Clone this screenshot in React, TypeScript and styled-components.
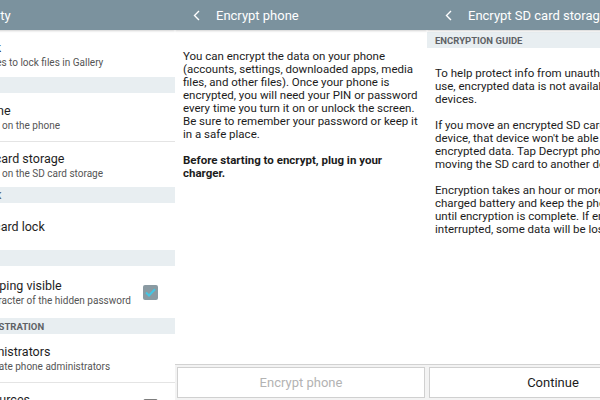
import React from "react";
import styled, { createGlobalStyle } from "styled-components";

const GlobalStyle = createGlobalStyle`
  * { box-sizing: border-box; }
  body {
    margin: 0;
    background: #ffffff;
    font-family: Roboto, "Noto Sans", "Liberation Sans", sans-serif;
    color: #222;
  }
  #root { width: 600px; height: 400px; overflow: hidden; }
`;

const Screen = styled.main`
  display: flex;
  width: 600px;
  height: 400px;
  overflow: hidden;
`;

const Panel = styled.section<{ $w: number; $clipLeft?: boolean }>`
  width: ${(p) => p.$w}px;
  flex-shrink: 0;
  height: 100%;
  overflow: hidden;
  display: flex;
  justify-content: ${(p) => (p.$clipLeft ? "flex-end" : "flex-start")};
`;

const Phone = styled.div`
  width: 252px;
  flex-shrink: 0;
  height: 100%;
  display: flex;
  flex-direction: column;
`;

const AppBar = styled.header`
  height: 30px;
  flex-shrink: 0;
  display: flex;
  align-items: center;
  gap: 16px;
  padding-left: 18px;
  background: #7b929e;
  color: #ffffff;
  box-shadow: 0 1px 2px rgba(0, 0, 0, 0.18);
  position: relative;
  z-index: 1;
`;

const Title = styled.h1`
  margin: 0;
  font-size: 13px;
  font-weight: 400;
  white-space: nowrap;
`;

const Back = () => (
  <svg width="7" height="11" viewBox="0 0 7 11" fill="none">
    <polyline points="6,1 1.5,5.5 6,10" stroke="#fff" strokeWidth="1.4" />
  </svg>
);

const Band = styled.div<{ $top?: number }>`
  height: 16px;
  flex-shrink: 0;
  margin-top: ${(p) => p.$top ?? 0}px;
  display: flex;
  align-items: center;
  padding-left: 8px;
  background: #e8eef1;
  color: #5e6266;
  font-size: 9.5px;
  font-weight: 700;
  white-space: nowrap;
`;

const Item = styled.div<{ $divider?: boolean; $h?: number }>`
  height: ${(p) => p.$h ?? 46}px;
  flex-shrink: 0;
  display: flex;
  align-items: center;
  justify-content: space-between;
  padding: 0 17px 0 8px;
  border-bottom: ${(p) => (p.$divider ? "1px solid #e4e4e4" : "none")};
`;

const ItemText = styled.div`
  display: flex;
  flex-direction: column;
  gap: 2px;
  white-space: nowrap;
`;

const ItemTitle = styled.span`
  font-size: 12.5px;
  color: #1e1e1e;
`;

const ItemSub = styled.span`
  font-size: 10px;
  color: #555;
`;

const Check = styled.span<{ $on?: boolean }>`
  width: 15px;
  height: 15px;
  flex-shrink: 0;
  border-radius: 2px;
  display: flex;
  align-items: center;
  justify-content: center;
  background: ${(p) => (p.$on ? "#8a9aa2" : "#ffffff")};
  border: ${(p) => (p.$on ? "none" : "1.5px solid #7d7d7d")};
`;

const Tick = () => (
  <svg width="11" height="9" viewBox="0 0 11 9" fill="none">
    <polyline points="1,4.5 4,7.5 10,1.2" stroke="#43c6e3" strokeWidth="2" />
  </svg>
);

const Body = styled.div<{ $top: number }>`
  flex: 1;
  padding: ${(p) => p.$top}px 8px 0 8px;
  display: flex;
  flex-direction: column;
  gap: 13px;
`;

const Para = styled.p<{ $bold?: boolean }>`
  margin: 0;
  font-size: 11.5px;
  line-height: 13px;
  font-weight: ${(p) => (p.$bold ? 700 : 400)};
  color: #1c1c1c;
  white-space: nowrap;
`;

const Footer = styled.footer`
  flex-shrink: 0;
  border-top: 1px solid #d2d2d2;
  padding: 2px;
  background: #f3f3f3;
`;

const Button = styled.button<{ $disabled?: boolean }>`
  width: 100%;
  height: 31px;
  display: flex;
  align-items: center;
  justify-content: center;
  background: #ffffff;
  border: 1.5px solid #d0d0d0;
  font-family: inherit;
  font-size: 13px;
  color: ${(p) => (p.$disabled ? "#b3b3b3" : "#1c1c1c")};
`;

const Lines = ({ lines }: { lines: string[] }) => (
  <>
    {lines.map((l, i) => (
      <React.Fragment key={i}>
        {l}
        {i < lines.length - 1 && <br />}
      </React.Fragment>
    ))}
  </>
);

export default function App() {
  return (
    <>
      <GlobalStyle />
      <Screen>
        <Panel $w={175} $clipLeft>
          <Phone>
            <AppBar>
              <Back />
              <Title>Security</Title>
            </AppBar>
            <Item $h={47}>
              <ItemText>
                <ItemTitle>Content lock</ItemTitle>
                <ItemSub>Set up lock types to lock files in Gallery</ItemSub>
              </ItemText>
            </Item>
            <Band>ENCRYPTION</Band>
            <Item $divider $h={49}>
              <ItemText>
                <ItemTitle>Encrypt phone</ItemTitle>
                <ItemSub>Encrypt all data on the phone</ItemSub>
              </ItemText>
            </Item>
            <Item $h={45}>
              <ItemText>
                <ItemTitle>Encrypt SD card storage</ItemTitle>
                <ItemSub>Encrypt all data on the SD card storage</ItemSub>
              </ItemText>
            </Item>
            <Band>SIM CARD LOCK</Band>
            <Item $h={47}>
              <ItemText>
                <ItemTitle>Set up SIM card lock</ItemTitle>
              </ItemText>
            </Item>
            <Band>PASSWORDS</Band>
            <Item $h={52}>
              <ItemText>
                <ItemTitle>Password typing visible</ItemTitle>
                <ItemSub>Shows last character of the hidden password</ItemSub>
              </ItemText>
              <Check $on>
                <Tick />
              </Check>
            </Item>
            <Band>DEVICE ADMINISTRATION</Band>
            <Item $divider $h={49}>
              <ItemText>
                <ItemTitle>Phone administrators</ItemTitle>
                <ItemSub>View or deactivate phone administrators</ItemSub>
              </ItemText>
            </Item>
            <Item>
              <ItemText>
                <ItemTitle>Unknown sources</ItemTitle>
                <ItemSub>Allow installation of non-Play Store apps</ItemSub>
              </ItemText>
              <Check />
            </Item>
          </Phone>
        </Panel>

        <Panel $w={252}>
          <Phone>
            <AppBar>
              <Back />
              <Title>Encrypt phone</Title>
            </AppBar>
            <Body $top={20}>
              <Para>
                <Lines
                  lines={[
                    "You can encrypt the data on your phone",
                    "(accounts, settings, downloaded apps, media",
                    "files, and other files). Once your phone is",
                    "encrypted, you will need your PIN or password",
                    "every time you turn it on or unlock the screen.",
                    "Be sure to remember your password or keep it",
                    "in a safe place.",
                  ]}
                />
              </Para>
              <Para $bold>
                <Lines lines={["Before starting to encrypt, plug in your", "charger."]} />
              </Para>
            </Body>
            <Footer>
              <Button $disabled>Encrypt phone</Button>
            </Footer>
          </Phone>
        </Panel>

        <Panel $w={173}>
          <Phone>
            <AppBar>
              <Back />
              <Title>Encrypt SD card storage</Title>
            </AppBar>
            <Band $top={2}>ENCRYPTION GUIDE</Band>
            <Body $top={19}>
              <Para>
                <Lines
                  lines={[
                    "To help protect info from unauthorized",
                    "use, encrypted data is not available on other",
                    "devices.",
                  ]}
                />
              </Para>
              <Para>
                <Lines
                  lines={[
                    "If you move an encrypted SD card to another",
                    "device, that device won't be able to read",
                    "encrypted data. Tap Decrypt phone before",
                    "moving the SD card to another device.",
                  ]}
                />
              </Para>
              <Para>
                <Lines
                  lines={[
                    "Encryption takes an hour or more. Start with a",
                    "charged battery and keep the phone plugged in",
                    "until encryption is complete. If encryption is",
                    "interrupted, some data will be lost.",
                  ]}
                />
              </Para>
            </Body>
            <Footer>
              <Button>Continue</Button>
            </Footer>
          </Phone>
        </Panel>
      </Screen>
    </>
  );
}
